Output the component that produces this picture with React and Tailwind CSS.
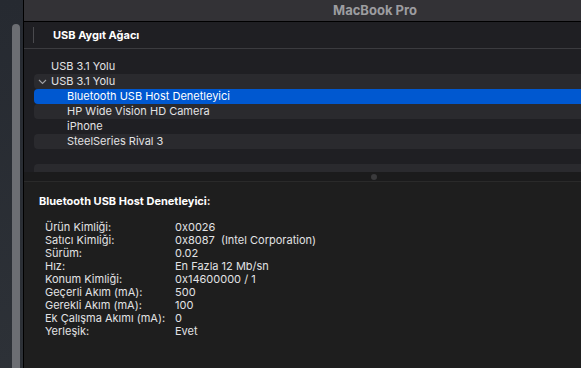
import React from "react";

const treeRows = [
  { label: "USB 3.1 Yolu", indent: 0, alt: false },
  { label: "USB 3.1 Yolu", indent: 0, alt: true, chevron: true },
  { label: "Bluetooth USB Host Denetleyici", indent: 1, selected: true },
  { label: "HP Wide Vision HD Camera", indent: 1, alt: true },
  { label: "iPhone", indent: 1, alt: false },
  { label: "SteelSeries Rival 3", indent: 1, alt: true },
  { label: "", indent: 1, alt: false },
];

const details = [
  ["Ürün Kimliği:", "0x0026"],
  ["Satıcı Kimliği:", "0x8087  (Intel Corporation)"],
  ["Sürüm:", "0.02"],
  ["Hız:", "En Fazla 12 Mb/sn"],
  ["Konum Kimliği:", "0x14600000 / 1"],
  ["Geçerli Akım (mA):", "500"],
  ["Gerekli Akım (mA):", "100"],
  ["Ek Çalışma Akımı (mA):", "0"],
  ["Yerleşik:", "Evet"],
];

function Chevron() {
  return (
    <svg width="9" height="6" viewBox="0 0 9 6" className="mr-[4px]">
      <path d="M1 1 L4.5 4.5 L8 1" fill="none" stroke="#a0a0a4" strokeWidth="1.1" />
    </svg>
  );
}

function TreeRow({ row }) {
  let bg = "";
  if (row.selected) bg = "bg-[#0058d0] text-white";
  else if (row.alt) bg = "bg-[#2a2a2e]";
  return (
    <div className={`flex h-[15px] items-center rounded-l-[4px] ${bg}`}>
      <div className={row.indent ? "w-[33px]" : "w-[17px]"} />
      {row.chevron ? (
        <div className="-ml-[13px] flex items-center">
          <Chevron />
        </div>
      ) : null}
      <span className="whitespace-pre">{row.label}</span>
    </div>
  );
}

export default function App() {
  return (
    <div
      className="flex h-[368px] w-[581px] overflow-hidden bg-[#1e1e1e] text-[11px] text-[#e2e2e4]"
      style={{ fontFamily: "Inter, 'Noto Sans', sans-serif" }}
    >
      {/* left strip */}
      <div className="relative w-[23px] shrink-0 bg-gradient-to-b from-[#262a31] to-[#2d3137]">
        <div className="absolute left-[12px] top-[24px] h-[360px] w-[8px] rounded-t-full bg-[#6c6e73]" />
      </div>
      <div className="w-px shrink-0 bg-black" />

      <div className="flex min-w-0 flex-1 flex-col">
        {/* title bar */}
        <div className="flex h-[21px] shrink-0 items-center justify-center bg-[#333236] pl-[145px]">
          <span className="text-[13px] font-bold text-[#9d9da0]">MacBook Pro</span>
        </div>
        <div className="h-px shrink-0 bg-black" />

        {/* header */}
        <div className="flex h-[26px] shrink-0 items-center bg-[#1f1f23]">
          <div className="ml-[9px] h-[16px] w-px bg-[#4a4a4e]" />
          <span className="ml-[19px] text-[11px] font-bold text-white">USB Aygıt Ağacı</span>
        </div>
        <div className="h-px shrink-0 bg-[#3b3b3f]" />

        {/* tree */}
        <div className="flex h-[123px] shrink-0 flex-col overflow-hidden bg-[#1f1f23] pl-[10px] pt-[10px]">
          {treeRows.map((row, i) => (
            <TreeRow key={i} row={row} />
          ))}
          <div className="h-[8px] rounded-tl-[4px] bg-[#2a2a2e]" />
        </div>

        {/* splitter */}
        <div className="flex h-[10px] shrink-0 items-center justify-center border-b border-[#2a2a2a] bg-[#1b1b1c] pl-[143px]">
          <div className="h-[6px] w-[6px] rounded-full bg-[#3a3a3c]" />
        </div>

        {/* details */}
        <div className="flex-1 bg-[#1e1e1e] pl-[15px] pt-[11px]">
          <div className="text-[11px] font-bold text-white">Bluetooth USB Host Denetleyici:</div>
          <div className="mt-[11px] pl-[6px]">
            {details.map(([k, v]) => (
              <div key={k} className="flex h-[13px] items-center">
                <span className="w-[130px] shrink-0">{k}</span>
                <span className="whitespace-pre">{v}</span>
              </div>
            ))}
          </div>
        </div>
      </div>
    </div>
  );
}
